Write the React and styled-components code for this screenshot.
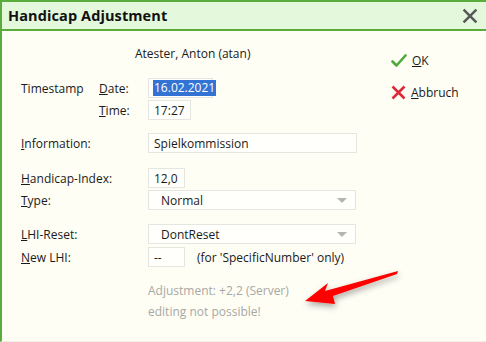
import React from 'react'
import styled, { createGlobalStyle } from 'styled-components'

const GlobalStyle = createGlobalStyle`
  html, body {
    margin: 0;
    padding: 0;
    background: #fefef5;
  }
  body {
    font-family: 'Open Sans', 'DejaVu Sans', sans-serif;
    font-size: 12px;
    color: #1a1a1a;
  }
`

const Window = styled.div`
  position: relative;
  width: 486px;
  height: 342px;
  box-sizing: border-box;
  border-left: 2px solid #5aad3c;
  border-bottom: 1px solid #eef0e4;
  background: #fefef5;
  overflow: hidden;
`

const TitleBar = styled.div`
  display: flex;
  align-items: center;
  justify-content: space-between;
  height: 27px;
  padding: 0 8px 0 6px;
  background: #e4f8dc;
  border-top: 2px solid #5aad3c;
  border-bottom: 2px solid #5aad3c;
`

const Title = styled.h1`
  margin: 0;
  font-size: 14.5px;
  font-weight: 700;
  color: #111;
  letter-spacing: 0.1px;
`

const CloseButton = styled.button`
  display: flex;
  padding: 0;
  border: none;
  background: none;
  cursor: pointer;
`

const Body = styled.div`
  display: flex;
  padding-top: 15px;
`

const Form = styled.div`
  display: flex;
  flex-direction: column;
  width: 368px;
  padding-left: 19px;
`

const NameLine = styled.div`
  height: 16px;
  line-height: 16px;
  padding-left: 114px;
  margin-bottom: 16px;
`

const Row = styled.div`
  display: flex;
  align-items: center;
  height: 20px;
  margin-top: ${p => p.$gap || 0}px;
`

const Label = styled.label`
  width: ${p => p.$width || 127}px;
  flex-shrink: 0;
`

const Field = styled.div`
  display: flex;
  align-items: center;
  justify-content: space-between;
  box-sizing: border-box;
  width: ${p => p.$width}px;
  height: 20px;
  padding: 0 ${p => (p.$select ? 8 : 5)}px 0 ${p => (p.$select ? 12 : 5)}px;
  border: 1px solid #e6e6e0;
  background: #fffffb;
  white-space: nowrap;
`

const Selected = styled.span`
  margin-left: -1px;
  padding: 0 1px;
  background: #3373d4;
  color: #fff;
  line-height: 16px;
`

const Caret = styled.span`
  width: 0;
  height: 0;
  border-left: 5px solid transparent;
  border-right: 5px solid transparent;
  border-top: 5px solid #b4b4b4;
`

const Hint = styled.span`
  margin-left: 12px;
`

const Note = styled.div`
  padding-left: 127px;
  color: #a8a8a4;
  line-height: 16px;
  margin-top: ${p => p.$gap}px;
`

const Actions = styled.div`
  display: flex;
  flex-direction: column;
  gap: 15px;
  padding-top: 6px;
  padding-left: 2px;
`

const ActionButton = styled.button`
  display: flex;
  align-items: center;
  gap: 5px;
  padding: 0;
  border: none;
  background: none;
  font: inherit;
  color: #1a1a1a;
  cursor: pointer;
`

const Arrow = styled.svg`
  position: absolute;
  left: 0;
  top: 0;
  pointer-events: none;
`

function CheckIcon() {
  return (
    <svg width="16" height="14" viewBox="0 0 16 14">
      <path d="M1.5 7.5 L5.5 11.5 L14.5 1.5" fill="none" stroke="#4fa93a" strokeWidth="2.6" strokeLinecap="round" strokeLinejoin="round" />
    </svg>
  )
}

function CrossIcon({ color = '#dd2a3a', size = 15, width = 2.6 }) {
  return (
    <svg width={size} height={size} viewBox="0 0 15 15">
      <path d="M1.5 1.5 L13.5 13.5 M13.5 1.5 L1.5 13.5" fill="none" stroke={color} strokeWidth={width} />
    </svg>
  )
}

export default function App() {
  return (
    <>
      <GlobalStyle />
      <Window>
        <TitleBar>
          <Title>Handicap Adjustment</Title>
          <CloseButton aria-label="Close">
            <CrossIcon color="#595959" size={16} width={2.4} />
          </CloseButton>
        </TitleBar>
        <Body>
          <Form>
            <NameLine>Atester, Anton (atan)</NameLine>
            <Row>
              <Label $width={78}>Timestamp</Label>
              <Label $width={49}><u>D</u>ate:</Label>
              <Field $width={65}><Selected>16.02.2021</Selected></Field>
            </Row>
            <Row $gap={2}>
              <Label $width={78} />
              <Label $width={49}><u>T</u>ime:</Label>
              <Field $width={43}>17:27</Field>
            </Row>
            <Row $gap={13}>
              <Label><u>I</u>nformation:</Label>
              <Field $width={209}>Spielkommission</Field>
            </Row>
            <Row $gap={15}>
              <Label><u>H</u>andicap-Index:</Label>
              <Field $width={37}>12,0</Field>
            </Row>
            <Row $gap={2}>
              <Label><u>T</u>ype:</Label>
              <Field $width={208} $select>Normal<Caret /></Field>
            </Row>
            <Row $gap={14}>
              <Label><u>L</u>HI-Reset:</Label>
              <Field $width={208} $select>DontReset<Caret /></Field>
            </Row>
            <Row $gap={3}>
              <Label><u>N</u>ew LHI:</Label>
              <Field $width={37}>--</Field>
              <Hint>(for 'SpecificNumber' only)</Hint>
            </Row>
            <Note $gap={16}>Adjustment: +2,2 (Server)</Note>
            <Note $gap={5}>editing not possible!</Note>
          </Form>
          <Actions>
            <ActionButton><CheckIcon /><span><u>O</u>K</span></ActionButton>
            <ActionButton><CrossIcon /><span><u>A</u>bbruch</span></ActionButton>
          </Actions>
        </Body>
        <Arrow width="486" height="342" viewBox="0 0 486 342">
          <defs>
            <filter id="shadow" x="-20%" y="-50%" width="140%" height="200%">
              <feDropShadow dx="1" dy="3" stdDeviation="3" floodColor="#000" floodOpacity="0.35" />
            </filter>
          </defs>
          <polygon
            points="303,301 326,283 323,291 396,271 395,274 331,296 333,304"
            fill="#ff0000"
            filter="url(#shadow)"
          />
        </Arrow>
      </Window>
    </>
  )
}
